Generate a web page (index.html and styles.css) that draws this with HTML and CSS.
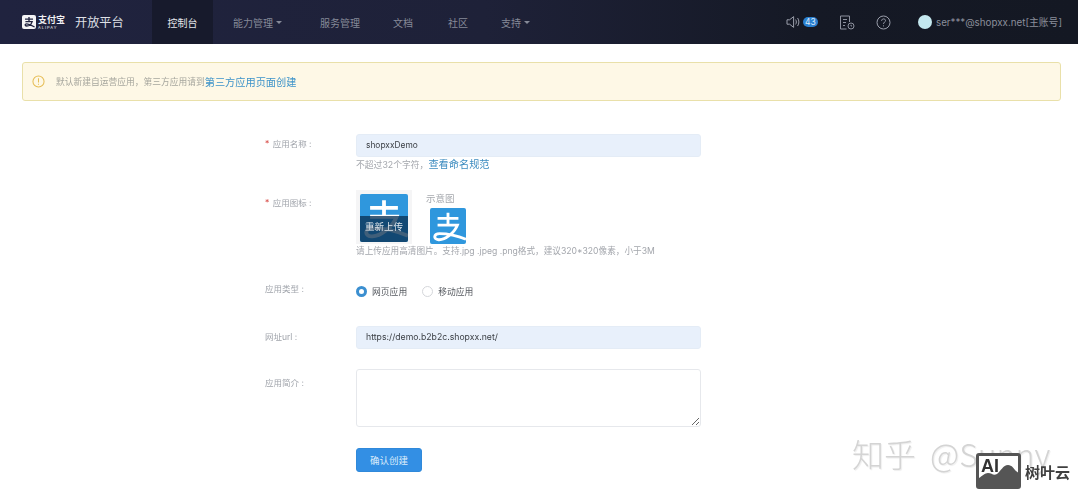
FILE: index.html
```html
<!DOCTYPE html>
<html lang="zh-CN">
<head>
<meta charset="utf-8">
<title>开放平台</title>
<link rel="stylesheet" href="styles.css">
</head>
<body>
<div class="page">
  <header class="topbar">
    <div class="brand">
      <svg class="brand-mark" width="14" height="14" viewBox="0 0 14 14"><rect width="14" height="14" rx="2" fill="#f4f4f6"/><path d="M3 4.200h8M7 2v4M3.400 6.600h6.800C9.400 9 7 11 4.600 11 2.800 11 2.600 8.800 4.600 8.800c2 0 5 1.600 8 3.200" fill="none" stroke="#20233f" stroke-width="1.300"/></svg>
      <div class="brand-word"><span class="brand-cn">支付宝</span><span class="brand-en">ALIPAY</span></div>
      <span class="brand-title">开放平台</span>
    </div>
    <nav class="nav">
      <a class="nav-item active">控制台</a>
      <a class="nav-item n1">能力管理<i class="caret"></i></a>
      <a class="nav-item n2">服务管理</a>
      <a class="nav-item n3">文档</a>
      <a class="nav-item n4">社区</a>
      <a class="nav-item n5">支持<i class="caret"></i></a>
    </nav>
    <div class="tools">
      <svg class="ico-speaker" width="15" height="14" viewBox="0 0 15 14" fill="none" stroke="#9a9eab" stroke-width="1"><path d="M1 4.800h2.600L7.600 1.600v10.800L3.600 9.200H1z"/><path d="M9.600 4.600c1 1.400 1 3.400 0 4.800M11.600 3c1.700 2.400 1.700 5.600 0 8"/></svg>
      <span class="badge">43</span>
      <svg class="ico-doc" width="16" height="15" viewBox="0 0 16 15" fill="none" stroke="#8d919e" stroke-width="1"><path d="M10.500 7V1H1.500v13h6"/><path d="M4 4.500h4M4 7.500h3M4 10.500h2"/><circle cx="12" cy="11" r="3"/><path d="M12 9.800V11h1"/></svg>
      <svg class="ico-help" width="15" height="15" viewBox="0 0 15 15" fill="none" stroke="#9a9eab" stroke-width="1"><circle cx="7.500" cy="7.500" r="6.500"/><path d="M5.600 5.800c0-2.500 3.900-2.500 3.900-.1 0 1.400-2 1.500-2 3.200"/><path d="M7.500 10.400v1"/></svg>
      <span class="avatar"></span>
      <span class="account">ser***@shopxx.net[主账号]</span>
    </div>
  </header>

  <main class="main">
    <div class="alert">
      <svg class="alert-ico" width="14" height="14" viewBox="0 0 14 14" fill="none" stroke="#e6bd55" stroke-width="1.100"><circle cx="7" cy="7" r="6"/><path d="M7 3.600v4.400M7 9.400v1.100"/></svg>
      <span class="alert-text">默认新建自运营应用，第三方应用请到</span><a class="alert-link">第三方应用页面创建</a>
    </div>

    <form class="form">
      <div class="row row-name">
        <label class="label label-name"><em>*</em> 应用名称 :</label>
        <div class="control">
          <div class="input filled input-name">shopxxDemo</div>
          <p class="hint">不超过32个字符，<a class="hint-link">查看命名规范</a></p>
        </div>
      </div>

      <div class="row row-icon">
        <label class="label label-icon"><em>*</em> 应用图标 :</label>
        <div class="control">
          <div class="icons">
            <div class="upload">
              <div class="upload-img">
                <svg class="zhi" viewBox="0 0 38 38"><rect width="38" height="38" fill="#2f97dd"/><path d="M8 11H30M19 5V18M8 18H29C26 26 16 34 9 33.500 3 33 4 27 10 27 17 27 26 28 38 33" fill="none" stroke="#fff" stroke-width="3"/></svg>
                <span class="upload-mask">重新上传</span>
              </div>
            </div>
            <div class="sample">
              <span class="sample-title">示意图</span>
              <svg class="sample-img" viewBox="0 0 38 38"><rect width="38" height="38" rx="2" fill="#2f97dd"/><path d="M8 11H30M19 5V18M8 18H29C26 26 16 34 9 33.500 3 33 4 27 10 27 17 27 26 28 38 33" fill="none" stroke="#fff" stroke-width="3"/></svg>
            </div>
          </div>
          <p class="hint hint-upload">请上传应用高清图片。支持.jpg .jpeg .png格式，建议320*320像素，小于3M</p>
        </div>
      </div>

      <div class="row row-type">
        <label class="label label-type">应用类型 :</label>
        <div class="control radios">
          <span class="radio on"></span><span class="radio-text">网页应用</span>
          <span class="radio"></span><span class="radio-text">移动应用</span>
        </div>
      </div>

      <div class="row row-url">
        <label class="label label-url">网址url :</label>
        <div class="control"><div class="input filled input-url">https://demo.b2b2c.shopxx.net/</div></div>
      </div>

      <div class="row row-intro">
        <label class="label label-intro">应用简介 :</label>
        <div class="control"><textarea class="textarea"></textarea></div>
      </div>

      <div class="row">
        <span></span>
        <div class="control"><button class="btn" type="button">确认创建</button></div>
      </div>
    </form>
  </main>

  <div class="watermark">知乎 @Sunny</div>
  <div class="stamp">
    <div class="stamp-box">
      <span class="stamp-ai">AI</span>
      <svg class="stamp-hill" width="44" height="22" viewBox="0 0 44 22"><path d="M0 22V15c5-1 8-6 12-6 4 0 5 3 9 1 4-3 6-9 11-9 4 0 6 4 8 6l4 3v12z"/></svg>
    </div>
    <span class="stamp-text">树叶云</span>
  </div>
</div>
</body>
</html>
```

FILE: styles.css
```css
* { box-sizing: border-box; }
html, body { margin: 0; height: 500px; overflow: hidden; background: #fff; }
body { font-family: Inter, "Liberation Sans", "Noto Sans CJK SC", sans-serif; font-size: 10px; color: #8f939c; }
.page { position: relative; width: 1078px; height: 500px; overflow: hidden; filter: blur(0.35px); }

.topbar { display: flex; align-items: stretch; height: 44px; background: linear-gradient(90deg, #20233f 0%, #1e2138 45%, #151925 75%, #141823 100%); }
.brand { display: flex; align-items: center; width: 152px; padding-left: 22px; }
.brand-mark { flex: none; }
.brand-word { display: flex; flex-direction: column; margin-left: 2px; width: 27px; color: #f0f0f3; }
.brand-cn { font-size: 9px; line-height: 10px; font-weight: 700; }
.brand-en { font-size: 4px; line-height: 5px; letter-spacing: 1px; }
.brand-title { margin-left: 10px; font-size: 12.200px; color: #dfe0e6; white-space: nowrap; }

.nav { display: flex; align-items: stretch; }
.nav-item { display: flex; align-items: center; color: #868a98; font-size: 10px; white-space: nowrap; }
.nav-item.active { width: 61px; justify-content: center; background: #171a2c; color: #e4e5ea; }
.n1 { margin-left: 20px; }
.n2 { margin-left: 38px; }
.n3 { margin-left: 33px; }
.n4 { margin-left: 35px; }
.n5 { margin-left: 33px; }
.caret { margin-left: 3px; width: 0; height: 0; border-left: 3px solid transparent; border-right: 3px solid transparent; border-top: 3px solid #868a98; }

.tools { display: flex; align-items: center; margin-left: auto; padding-right: 16px; }
.badge { margin-left: 2px; width: 15px; height: 10px; border-radius: 5px; background: #2a7fd0; color: #dfeaf6; font-size: 8.500px; line-height: 10px; text-align: center; }
.ico-doc { margin-left: 21px; }
.ico-help { margin-left: 21px; }
.avatar { margin-left: 27px; width: 14px; height: 14px; border-radius: 50%; background: #c4e8ef; }
.account { margin-left: 4px; font-size: 9.800px; color: #8b8f9b; white-space: nowrap; }

.main { padding: 18px 17px 0 22px; }
.alert { display: flex; align-items: center; height: 39px; padding-left: 9px; background: #fef8e6; border: 1px solid #e9e0a9; border-radius: 3px; }
.alert-ico { flex: none; width: 13px; height: 13px; margin-right: 11px; }
.alert-text { font-size: 8.750px; color: #a6a69e; }
.alert-link { font-size: 10.200px; color: #3d93c9; }

.form { margin: 33px 0 0 243px; }
.row { display: grid; grid-template-columns: 91px 345px; }
.row-name { padding-bottom: 18px; }
.row-icon { padding-bottom: 26px; }
.row-type { padding-bottom: 28px; }
.row-url { padding-bottom: 20px; }
.row-intro { padding-bottom: 21px; }
.label { display: block; padding-top: 4px; font-size: 8.500px; line-height: 14px; color: #a0a4ab; white-space: nowrap; }
.label em { margin-right: 1px; font-style: normal; color: #d9534f; }
.label-name { padding-top: 3px; }
.label-icon { padding-top: 6px; }
.label-type { padding-top: 0; margin-top: -2px; }
.label-url { padding-top: 4px; }
.label-intro { padding-top: 7px; }

.input { height: 23px; padding-left: 9px; border-radius: 3px; line-height: 21px; color: #3c4046; }
.input-name { font-size: 8.400px; }
.input-url { font-size: 8.700px; }
.input.filled { background: #e8f0fb; border: 1px solid #e4ecf6; }
.hint { margin: 0; font-size: 8.800px; line-height: 14px; color: #a3a6ac; white-space: nowrap; }
.hint-upload { font-size: 8.650px; }
.hint-link { font-size: 10.200px; color: #3d8cc0; }

.icons { display: flex; height: 54px; }
.upload { width: 56px; height: 54px; padding: 4px; background: #f5f5f6; }
.upload-img { position: relative; width: 48px; height: 48px; border-radius: 2px; overflow: hidden; }
.zhi { display: block; width: 48px; height: 48px; }
.upload-mask { position: absolute; left: 0; right: 0; bottom: 0; height: 26px; background: rgba(10, 50, 85, .78); color: #dfe5ea; font-size: 9.500px; line-height: 21px; text-align: center; }
.sample { display: flex; flex-direction: column; margin-left: 17px; }
.sample-title { margin-left: -3px; font-size: 9.500px; line-height: 18px; color: #a6a9ae; }
.sample-img { display: block; width: 38px; height: 38px; }

.radios { display: flex; align-items: center; height: 14px; }
.radio { width: 11px; height: 11px; border-radius: 50%; border: 1px solid #d4d6da; background: #fff; }
.radio.on { border: 3px solid #3b8fd0; }
.radio-text { margin-left: 5px; margin-right: 15px; font-size: 8.800px; color: #55595f; }

.textarea { display: block; width: 345px; height: 58px; padding: 0; resize: vertical; background: #fff; border: 1px solid #e6e8ec; border-radius: 3px; outline: 0; }

.btn { width: 66px; height: 24px; padding: 0; background: #338fe4; border: 1px solid #3089da; border-radius: 3px; color: #dcecfb; font: 9.500px Inter, "Noto Sans CJK SC", sans-serif; }

.watermark { position: absolute; left: 852px; top: 431px; font-size: 32px; line-height: 44px; word-spacing: 7px; font-family: "Noto Sans CJK SC", "Liberation Sans", sans-serif; font-weight: 300; color: #d4d4d4; white-space: nowrap; text-shadow: 1px 1px 1px #eee; }
.stamp { position: absolute; left: 976px; top: 453px; display: flex; align-items: center; }
.stamp-box { position: relative; width: 45px; height: 36px; background: #fff; border: 3px solid #555; border-top-width: 3px; border-radius: 3px; overflow: hidden; }
.stamp-ai { position: absolute; left: 2px; top: 1px; z-index: 1; color: #333; font: 700 18px/18px "Liberation Sans", sans-serif; }
.stamp-hill { position: absolute; left: -3px; bottom: 0; }
.stamp-hill path { fill: #555; }
.stamp-text { margin-left: 4px; margin-top: 1px; font: 700 15px/18px "Noto Sans CJK SC", sans-serif; color: #3f3f3f; white-space: nowrap; }
```
